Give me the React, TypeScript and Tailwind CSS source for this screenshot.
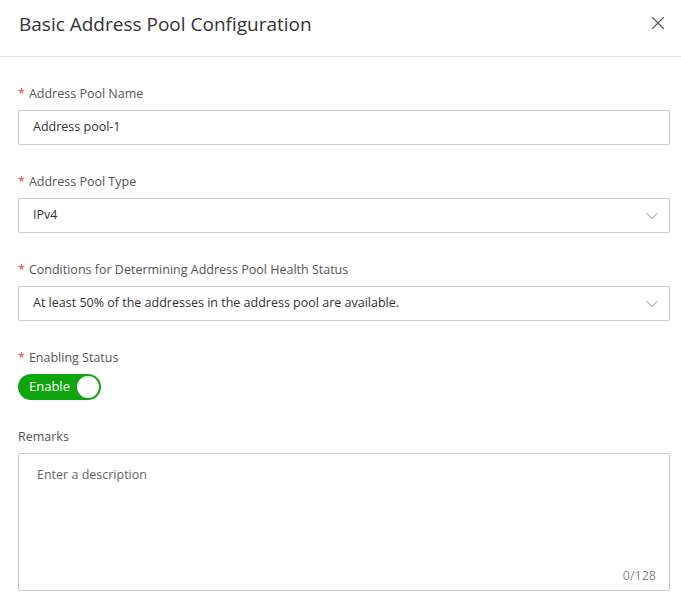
import { X, ChevronDown } from "lucide-react";

const font = { fontFamily: '"Open Sans", "Noto Sans", Arial, sans-serif' };

function Label({ text, required = true }: { text: string; required?: boolean }) {
  return (
    <div className="mb-2 flex h-4 items-center text-[12.5px] leading-4 text-[#555]">
      {required ? <span className="mr-1 text-[#e5484d]">*</span> : null}
      {text}
    </div>
  );
}

function Select({ value }: { value: string }) {
  return (
    <div className="flex h-[35px] items-center justify-between rounded-[2px] border border-[#c7cad1] bg-white pl-[14px] pr-[7px] text-[12.5px] text-[#333]">
      <span>{value}</span>
      <ChevronDown size={20} strokeWidth={1.1} className="text-[#777]" />
    </div>
  );
}

export default function App() {
  return (
    <div className="min-h-screen w-[681px] bg-white" style={font}>
      <div className="flex h-[57px] items-center justify-between border-b border-[#e3e4e6] pl-[19px] pr-[12px]">
        <h1 className="-mt-[7px] text-[19px] font-normal text-[#333]">Basic Address Pool Configuration</h1>
        <X size={22} strokeWidth={1.2} className="-mt-[11px] text-[#555]" />
      </div>

      <div className="px-[18px] pt-[29px] pr-[11px]">
        <div className="mb-[29px]">
          <Label text="Address Pool Name" />
          <div className="flex h-[35px] items-center rounded-[2px] border border-[#c7cad1] pl-[14px] text-[12.5px] text-[#333]">
            Address pool-1
          </div>
        </div>

        <div className="mb-[29px]">
          <Label text="Address Pool Type" />
          <Select value="IPv4" />
        </div>

        <div className="mb-[29px]">
          <Label text="Conditions for Determining Address Pool Health Status" />
          <Select value="At least 50% of the addresses in the address pool are available." />
        </div>

        <div className="mb-[29px]">
          <Label text="Enabling Status" />
          <div className="flex h-[26px] w-[83px] items-center justify-between rounded-full bg-[#0ea50e] pl-[11px] pr-[2px] text-[13px] text-white">
            <span>Enable</span>
            <span className="h-[22px] w-[22px] rounded-full bg-white" />
          </div>
        </div>

        <div>
          <Label text="Remarks" required={false} />
          <div className="relative h-[138px] rounded-[2px] border border-[#c7cad1] pl-[18px] pt-[12px] text-[12.5px] text-[#666]">
            Enter a description
            <span className="absolute bottom-[4px] right-[13px] text-[12.5px] text-[#888]">0/128</span>
          </div>
        </div>
      </div>
    </div>
  );
}
